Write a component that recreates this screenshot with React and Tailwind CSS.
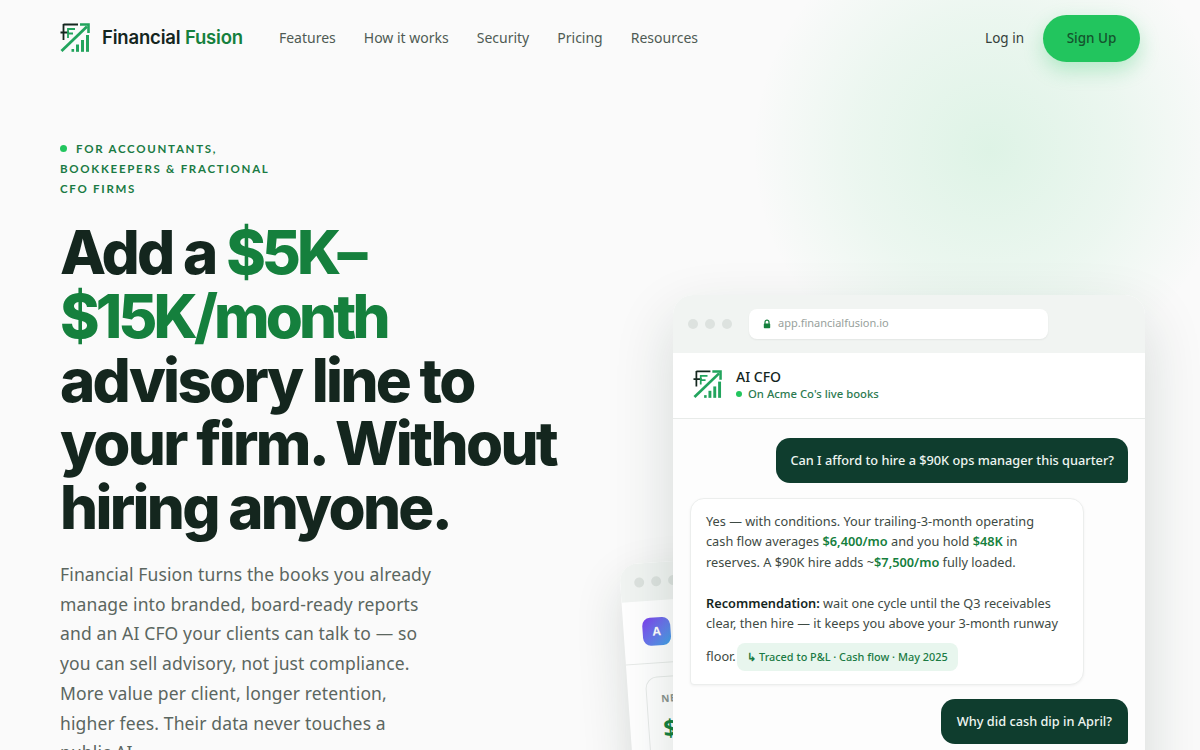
import React from "react";

const NAV = ["Features", "How it works", "Security", "Pricing", "Resources"];

function Logo({ className }) {
  return (
    <svg viewBox="0 0 30 30" fill="none" className={className}>
      <path d="M3.5 1.5H18M3.5 1V17M0.5 9.5H9" stroke="#14261e" strokeWidth="1.8" />
      <path d="M1.5 28L27 3.5" stroke="#22a45d" strokeWidth="2.8" />
      <path d="M20 1.5H28.5V10" stroke="#22a45d" strokeWidth="2.6" />
      <path d="M8 15V6H15M8 10.5H13" stroke="#22a45d" strokeWidth="1.8" />
      <rect x="11.5" y="26" width="2.6" height="2.8" fill="#22a45d" />
      <rect x="16" y="21.5" width="3" height="7.3" fill="#22a45d" />
      <rect x="21" y="17" width="3" height="11.8" fill="#22a45d" />
      <rect x="26" y="12" width="3" height="16.8" fill="#22a45d" />
    </svg>
  );
}

function BrowserDots() {
  return (
    <div className="flex gap-[7px]">
      <span className="w-[10px] h-[10px] rounded-full bg-[#dde2df]" />
      <span className="w-[10px] h-[10px] rounded-full bg-[#dde2df]" />
      <span className="w-[10px] h-[10px] rounded-full bg-[#dde2df]" />
    </div>
  );
}

function BackCard() {
  return (
    <div className="absolute left-[629px] top-[554px] w-[300px] h-[300px] -rotate-[4deg] rounded-t-[18px] bg-white shadow-[0_20px_50px_rgba(20,50,35,0.14)] overflow-hidden">
      <div className="h-[38px] bg-[#f1f4f2] flex items-center pl-[14px]">
        <BrowserDots />
      </div>
      <div className="h-[63px] border-b border-[#e8ebe9] flex items-center pl-[19px]">
        <div className="w-[28px] h-[28px] rounded-lg bg-gradient-to-br from-[#7c3aed] to-[#38a3e8] flex items-center justify-center text-white text-xs font-bold">
          A
        </div>
      </div>
      <div className="ml-[18px] mt-[13px] w-[180px] h-[110px] border border-[#e8ebe9] rounded-xl p-[14px]">
        <div className="text-[10px] font-bold tracking-wider text-[#8b948f]">NET</div>
        <div className="mt-1 text-[24px] font-bold text-[#15803d]">$</div>
      </div>
    </div>
  );
}

function ChatWindow() {
  return (
    <div className="relative w-[472px] h-[500px] rounded-t-[20px] bg-white shadow-[0_24px_60px_rgba(20,50,35,0.16)] overflow-hidden">
      <div className="h-[58px] pb-[1px] bg-[#f1f4f2] flex items-center pl-[15px]">
        <BrowserDots />
        <div className="ml-[17px] w-[299px] h-[30px] bg-white rounded-lg shadow-[0_1px_2px_rgba(0,0,0,0.06)] flex items-center pl-[13px] gap-[6px]">
          <svg viewBox="0 0 10 10" className="w-[10px] h-[10px]" fill="none">
            <path d="M3 5V3.2a2 2 0 0 1 4 0V5" stroke="#15803d" strokeWidth="1.2" />
            <rect x="1.8" y="4.6" width="6.4" height="4.6" rx="0.8" fill="#15803d" />
          </svg>
          <span className="text-[11px] text-[#98a19c]">app.financialfusion.io</span>
        </div>
      </div>
      <div className="h-[66px] pb-[2px] border-b border-[#e8ebe9] flex items-center pl-[20px] gap-[14px]">
        <Logo className="w-[29px] h-[29px]" />
        <div>
          <div className="text-[14px] leading-[18px] font-medium text-[#14261e]">AI CFO</div>
          <div className="flex items-center gap-[6px] text-[11.3px] leading-[16px] font-medium text-[#2c7a50]">
            <span className="w-[6px] h-[6px] rounded-full bg-[#22c55e]" />
            On Acme Co's live books
          </div>
        </div>
      </div>
      <div className="flex flex-col pt-[19px] px-[17px] bg-[#fdfdfd] h-full">
        <div className="self-end bg-[#0f3d2e] text-[#eef5f1] text-[12.75px] font-medium rounded-[14px] rounded-br-[4px] px-[14px] h-[45px] flex items-center">
          Can I afford to hire a $90K ops manager this quarter?
        </div>
        <div className="mt-[15px] w-[394px] h-[187px] bg-white rounded-[14px] rounded-bl-[4px] border border-[#eceeed] shadow-[0_1px_3px_rgba(0,0,0,0.05)] pl-[15px] pr-[19px] pt-[12px] text-[12.75px] leading-[20.4px] text-[#3e4a44]">
          Yes — with conditions. Your trailing-3-month operating cash flow averages{" "}
          <b className="font-semibold text-[#15803d]">$6,400/mo</b> and you hold{" "}
          <b className="font-semibold text-[#15803d]">$48K</b> in reserves. A $90K hire adds ~
          <b className="font-semibold text-[#15803d]">$7,500/mo</b> fully loaded.
          <div className="h-[20.4px]" />
          <b className="font-semibold text-[#14261e]">Recommendation:</b> wait one cycle until the Q3 receivables clear, then hire — it keeps you above your 3-month runway floor.{" "}
          <span className="inline-flex items-center h-[28px] mt-[10px] -ml-[2px] px-[10px] rounded-lg bg-[#e8f6ee] text-[10.9px] font-medium text-[#1a7a44]">
            <b className="font-bold mr-[3px]">↳</b>Traced to P&amp;L · Cash flow · May 2025
          </span>
        </div>
        <div className="self-end mt-[14px] bg-[#0f3d2e] text-[#eef5f1] text-[12.75px] font-medium rounded-[14px] rounded-br-[4px] px-[16px] h-[45px] flex items-center">
          Why did cash dip in April?
        </div>
      </div>
    </div>
  );
}

export default function App() {
  return (
    <div className="relative w-[1200px] h-[750px] overflow-hidden bg-[#fafafa] font-['Noto_Sans',sans-serif] text-[#14261e]">
      <div className="absolute left-[750px] -top-[90px] w-[480px] h-[480px] rounded-full bg-[radial-gradient(circle,rgba(34,197,94,0.13)_0%,rgba(34,197,94,0.065)_40%,rgba(34,197,94,0)_70%)]" />

      <BackCard />

      <header className="relative flex items-center h-[76px] pl-[60px] pr-[60px]">
        <Logo className="w-[30px] h-[30px]" />
        <div className="ml-[12px] font-['Inter',sans-serif] text-[18.5px] font-semibold tracking-[-0.01em]">
          Financial <span className="text-[#15803d]">Fusion</span>
        </div>
        <nav className="ml-[36px] pb-[1px] flex gap-[28px] text-[14px] text-[#4f5a54]">
          {NAV.map((item) => (
            <span key={item}>{item}</span>
          ))}
        </nav>
        <span className="ml-auto text-[13.5px] text-[#34403a]">Log in</span>
        <button className="ml-[19px] w-[97px] h-[47px] rounded-full bg-[#22c55e] text-[13.5px] font-medium text-[#14532d] shadow-[0_8px_20px_rgba(34,197,94,0.28)]">
          Sign Up
        </button>
      </header>

      <main className="relative flex justify-between pl-[60px] pr-[55px]">
        <div className="w-[510px] pt-[63px]">
          <div className="w-[225px] font-['Lato',sans-serif] text-[11.5px] leading-[20px] font-bold tracking-[0.15em] text-[#1a7a44]">
            <span className="inline-block w-[7px] h-[7px] rounded-full bg-[#22c55e] mr-[9px] align-[1px]" />
            FOR ACCOUNTANTS, BOOKKEEPERS &amp; FRACTIONAL CFO FIRMS
          </div>
          <h1 className="mt-[22px] font-['Inter',sans-serif] text-[60px] leading-[63.8px] font-extrabold tracking-[-0.045em] text-[#14261e]">
            Add a <span className="text-[#15803d] tracking-[-0.065em]">$5K–$15K/month</span> advisory line to your firm. Without hiring anyone.
          </h1>
          <p className="mt-[20px] w-[376px] text-[17.5px] leading-[29.75px] tracking-[0.008em] text-[#5b6660]">
            Financial Fusion turns the books you already manage into branded, board-ready reports and an AI CFO your clients can talk to — so you can sell advisory, not just compliance. More value per client, longer retention, higher fees. Their data never touches a public AI.
          </p>
        </div>
        <div className="pt-[219px]">
          <ChatWindow />
        </div>
      </main>
    </div>
  );
}
